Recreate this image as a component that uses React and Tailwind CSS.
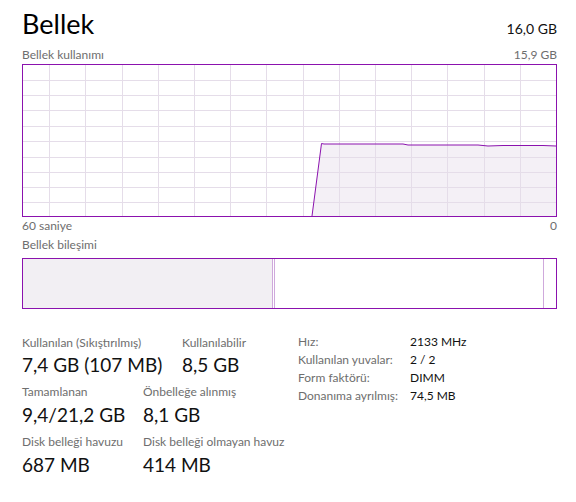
const PURPLE = '#8b12ae'

const VLINES = [26, 62, 99, 135, 171, 207, 243, 280, 316, 352, 388, 424, 461, 497]
const HLINES = [15, 30, 45, 61, 76, 92, 107, 122, 137]

function UsageChart() {
  // inner area of the bordered box: 533 x 151
  const pts = '289,151 298.5,78.5 301,79 380,79 385,80 455,80 465,81 480,80.5 520,80.5 533,81'
  return (
    <div className="h-[153px] border border-[#8b12ae]">
      <svg width="533" height="151" viewBox="0 0 533 151" className="block">
        <polygon points={pts + ' 533,151'} fill="#f4f0f6" />
        {VLINES.map((x) => (
          <line key={'v' + x} x1={x + 0.5} y1="0" x2={x + 0.5} y2="151" stroke="#e5dde9" strokeWidth="1" />
        ))}
        {HLINES.map((y) => (
          <line key={'h' + y} x1="0" y1={y + 0.5} x2="533" y2={y + 0.5} stroke="#e5dde9" strokeWidth="1" />
        ))}
        <polyline points={pts} fill="none" stroke={PURPLE} strokeWidth="1" />
      </svg>
    </div>
  )
}

function Composition() {
  return (
    <div className="h-[51px] border border-[#8b12ae] flex">
      <div className="w-[250px] bg-[#f2eff3] border-r border-[#cfa9dc]" />
      <div className="w-[2px] border-r border-[#cfa9dc]" />
      <div className="w-[269px] border-r border-[#cfa9dc]" />
      <div className="flex-1" />
    </div>
  )
}

function Stat({ label, value, w }) {
  return (
    <div className={w}>
      <div className="text-[12px] leading-[16px] text-[#6e6e6e]">{label}</div>
      <div className="mt-[2.6px] text-[19px] leading-[24px] text-[#111]">{value}</div>
    </div>
  )
}

const SPECS = [
  ['Hız:', '2133 MHz'],
  ['Kullanılan yuvalar:', '2 / 2'],
  ['Form faktörü:', 'DIMM'],
  ['Donanıma ayrılmış:', '74,5 MB'],
]

export default function App() {
  return (
    <div className="w-[576px] h-[502px] bg-white pl-[22px] pr-[19px] pt-[8px] font-['Lato',sans-serif] text-black">
      <div className="flex justify-between items-baseline">
        <h1 className="text-[27px] leading-[32px]">Bellek</h1>
        <span className="text-[14px] leading-[20px] text-[#111]">16,0 GB</span>
      </div>

      <div className="mt-[7px] flex justify-between text-[12px] leading-[16px] text-[#6e6e6e]">
        <span>Bellek kullanımı</span>
        <span>15,9 GB</span>
      </div>
      <div className="mt-[1px]">
        <UsageChart />
      </div>
      <div className="mt-[1px] flex justify-between text-[12px] leading-[16px] text-[#6e6e6e]">
        <span>60 saniye</span>
        <span>0</span>
      </div>
      <div className="mt-[3px] text-[12px] leading-[16px] text-[#6e6e6e]">Bellek bileşimi</div>
      <div className="mt-[4.5px]">
        <Composition />
      </div>

      <div className="mt-[24px] flex">
        <div className="w-[276px] pt-[2px] flex flex-col gap-[7.4px]">
          <div className="flex">
            <Stat w="w-[160px]" label="Kullanılan (Sıkıştırılmış)" value="7,4 GB (107 MB)" />
            <Stat label="Kullanılabilir" value="8,5 GB" />
          </div>
          <div className="flex">
            <Stat w="w-[121px]" label="Tamamlanan" value="9,4/21,2 GB" />
            <Stat label="Önbelleğe alınmış" value="8,1 GB" />
          </div>
          <div className="flex">
            <Stat w="w-[121px]" label="Disk belleği havuzu" value="687 MB" />
            <Stat label="Disk belleği olmayan havuz" value="414 MB" />
          </div>
        </div>
        <div className="flex flex-col text-[12px] leading-[18px]">
          {SPECS.map(([k, v]) => (
            <div key={k} className="flex">
              <span className="w-[112px] text-[#6e6e6e]">{k}</span>
              <span className="text-[#111]">{v}</span>
            </div>
          ))}
        </div>
      </div>
    </div>
  )
}
